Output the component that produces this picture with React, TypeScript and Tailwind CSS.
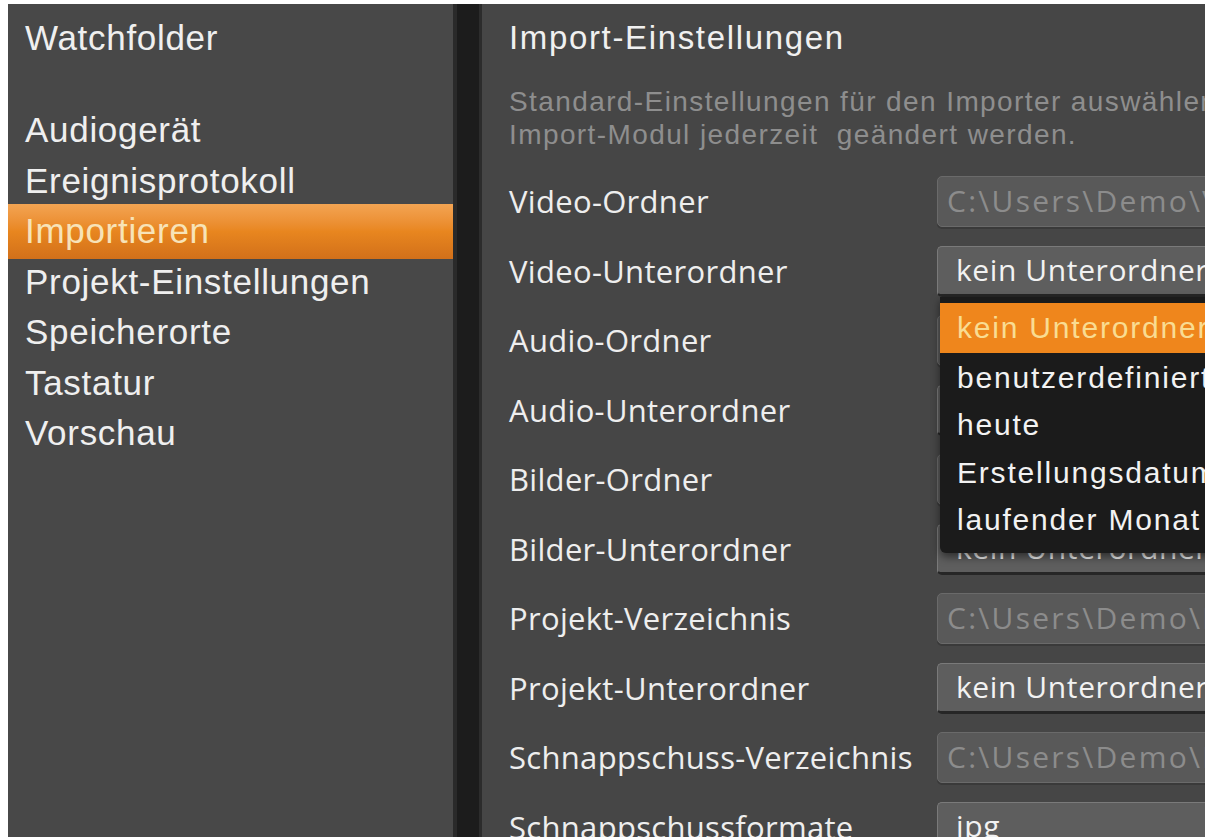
import React from 'react';

interface SettingRow {
  label: string;
  kind: 'path' | 'select';
  value: string;
}

const sidebarItems = [
  'Audiogerät',
  'Ereignisprotokoll',
  'Importieren',
  'Projekt-Einstellungen',
  'Speicherorte',
  'Tastatur',
  'Vorschau',
];

const rows: SettingRow[] = [
  { label: 'Video-Ordner', kind: 'path', value: 'C:\\Users\\Demo\\Videos' },
  { label: 'Video-Unterordner', kind: 'select', value: 'kein Unterordner' },
  { label: 'Audio-Ordner', kind: 'path', value: 'C:\\Users\\Demo\\Music' },
  { label: 'Audio-Unterordner', kind: 'select', value: 'kein Unterordner' },
  { label: 'Bilder-Ordner', kind: 'path', value: 'C:\\Users\\Demo\\Pictures' },
  { label: 'Bilder-Unterordner', kind: 'select', value: 'kein Unterordner' },
  { label: 'Projekt-Verzeichnis', kind: 'path', value: 'C:\\Users\\Demo\\Documents' },
  { label: 'Projekt-Unterordner', kind: 'select', value: 'kein Unterordner' },
  { label: 'Schnappschuss-Verzeichnis', kind: 'path', value: 'C:\\Users\\Demo\\Documents' },
  { label: 'Schnappschussformate', kind: 'select', value: 'jpg' },
];

const subfolderOptions = [
  'kein Unterordner',
  'benutzerdefiniert',
  'heute',
  'Erstellungsdatum',
  'laufender Monat',
];

const arial = "font-['Liberation_Sans',Arial,sans-serif]";
const segoe = "font-['Open_Sans','Noto_Sans',sans-serif]";

const Sidebar: React.FC = () => (
  <aside className={`w-[445px] shrink-0 bg-[#484848] pl-[17px] pt-[9px] text-[35px] tracking-[0.02em] text-[#efefef] ${arial}`}>
    <div className="h-[50px] leading-[50px]">Watchfolder</div>
    <div className="mt-[42px]">
      {sidebarItems.map((item) => {
        const active = item === 'Importieren';
        return active ? (
          <div
            key={item}
            className="-ml-[17px] -my-[2px] h-[54.5px] bg-gradient-to-b from-[#f3a452] via-[#e8861f] to-[#d2701a] pl-[17px] leading-[54px] text-[#f7e3b8]"
          >
            {item}
          </div>
        ) : (
          <div key={item} className="h-[50.5px] leading-[50px]">
            {item}
          </div>
        );
      })}
    </div>
  </aside>
);

const Dropdown: React.FC = () => (
  <div className={`absolute left-[3px] top-full z-10 w-[320px] overflow-hidden whitespace-nowrap rounded-bl-[6px] bg-[#1b1b1b] pb-[10px] pt-[6px] text-[30px] tracking-[0.06em] text-[#f2f2f2] shadow-[0_4px_8px_rgba(0,0,0,0.5)] ${arial}`}>
    {subfolderOptions.map((opt, i) =>
      i === 0 ? (
        <div key={opt} className="h-[50px] bg-[#ef861c] pl-[17px] leading-[50px] text-[#f9dc92]">
          {opt}
        </div>
      ) : (
        <div key={opt} className="h-[47.5px] pl-[17px] leading-[50px]">
          {opt}
        </div>
      )
    )}
  </div>
);

const Field: React.FC<{ row: SettingRow; open?: boolean }> = ({ row, open }) => {
  if (row.kind === 'path') {
    return (
      <div className={`h-[51px] w-[300px] overflow-hidden whitespace-nowrap rounded-[5px] border border-[#6a6a6a] bg-[#595959] pl-[9px] text-[30px] leading-[48px] tracking-[0.075em] text-[#8c8c8c] shadow-[0_2px_0_#3a3a3a] ${segoe}`}>
        {row.value}
      </div>
    );
  }
  return (
    <div className="relative">
      <div className={`h-[51px] w-[300px] overflow-hidden whitespace-nowrap rounded-[5px] border-t border-l border-[#7a7a7a] border-b-[3px] border-b-[#262626] bg-[#5e5e5e] pl-[18px] text-[30px] leading-[46px] tracking-[0.02em] text-[#f2f2f2] ${segoe}`}>
        {row.value}
      </div>
      {open && <Dropdown />}
    </div>
  );
};

const App: React.FC = () => {
  return (
    <div className="flex h-[837px] w-[1207px] overflow-hidden bg-white pl-[8px] pr-[2px] pt-[4px]">
      <Sidebar />
      <div className="w-[29px] shrink-0 border-l-[4px] border-r-[3px] border-l-[#2a2a2a] border-r-[#2c2c2c] bg-[#1c1c1c]" />
      <main className="relative flex-1 overflow-hidden bg-[#464646] pl-[27px] pt-[14px]">
        <h1 className={`whitespace-nowrap text-[33px] leading-[40px] tracking-[0.05em] text-[#f0f0f0] ${arial}`}>
          Import-Einstellungen
        </h1>
        <p className={`mt-[27px] whitespace-nowrap text-[28px] leading-[33px] tracking-[0.05em] text-[#8e8e8e] ${arial}`}>
          Standard-Einstellungen für den Importer auswählen. Diese können im
          <br />
          Import-Modul jederzeit&nbsp; geändert werden.
        </p>
        <div className="mt-[25px] flex flex-col gap-[18.5px]">
          {rows.map((row) => (
            <div key={row.label} className="grid h-[51px] grid-cols-[428px_1fr] items-center">
              <span className={`whitespace-nowrap text-[31px] leading-[51px] tracking-[0.01em] text-[#eeeeee] ${segoe}`}>
                {row.label}
              </span>
              <Field row={row} open={row.label === 'Video-Unterordner'} />
            </div>
          ))}
        </div>
      </main>
    </div>
  );
};

export default App;
